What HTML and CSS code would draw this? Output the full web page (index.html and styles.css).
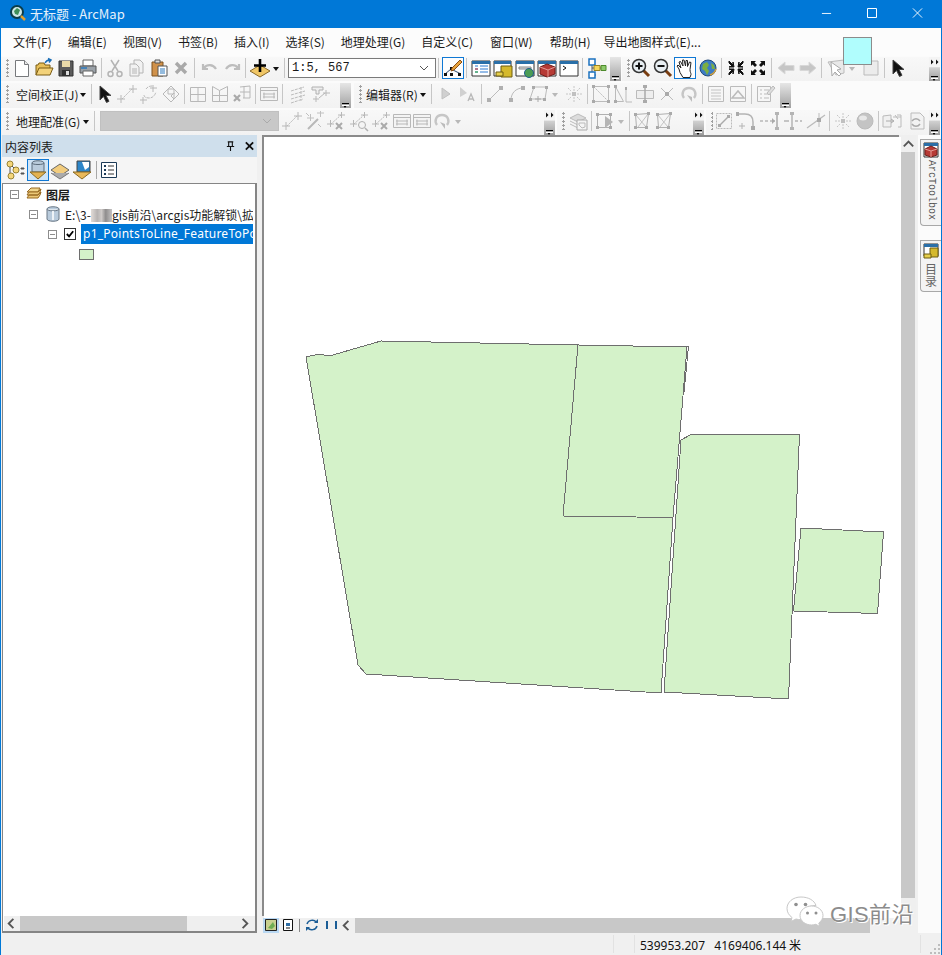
FILE: index.html
```html
<!DOCTYPE html>
<html lang="zh-CN">
<head>
<meta charset="utf-8">
<title>无标题 - ArcMap</title>
<link rel="stylesheet" href="styles.css">
</head>
<body>
<svg class="defs" width="0" height="0" aria-hidden="true">
<defs>
<symbol id="new" viewBox="0 0 22 22"><path d="M4.500 3.500h9l4 4v12h-13z" fill="#fff" stroke="#77797c"/><path d="M13.500 3.500v4h4" fill="#e8e8e8" stroke="#77797c"/></symbol>
<symbol id="open" viewBox="0 0 22 22"><path d="M3 18V8h2l1-2h5l1 2h5v3" fill="#e8c05a" stroke="#7a5c14"/><path d="M3 18l3-7h14l-3 7z" fill="#f3d27a" stroke="#7a5c14"/><path d="M12 6c1-2 3-3 5-3m-2-1.500l3 1.500-2 2.500" fill="none" stroke="#1c6fb8" stroke-width="1.500"/></symbol>
<symbol id="save" viewBox="0 0 22 22"><path d="M4 4h14v15H4z" fill="#5b5b5b" stroke="#333"/><path d="M7 4h8v6H7z" fill="#e9d9a8"/><path d="M7 13h8v6H7z" fill="#2f2f2f"/><path d="M11 14h3v4h-3z" fill="#ddd"/></symbol>
<symbol id="print" viewBox="0 0 22 22"><path d="M6 3h10v6H6z" fill="#fff" stroke="#666"/><path d="M3 9h16v7H3z" fill="#9aa1a8" stroke="#555"/><path d="M6 14h10v5H6z" fill="#fff" stroke="#666"/><path d="M4 11h6" stroke="#2a79bd" stroke-width="1.500"/></symbol>
<symbol id="cut" viewBox="0 0 22 22"><g fill="none" stroke="#b4b4b4" stroke-width="1.500"><path d="M7 3l7 11M15 3L8 14"/><circle cx="6.500" cy="17" r="2.500"/><circle cx="15.500" cy="17" r="2.500"/></g></symbol>
<symbol id="copy" viewBox="0 0 22 22"><g fill="#f2f2f2" stroke="#b4b4b4"><path d="M8 3h6l3 3v10H8z"/><path d="M4 7h6l3 3v9H4z"/><path d="M6 12h5M6 14h5M6 16h5"/></g></symbol>
<symbol id="paste" viewBox="0 0 22 22"><path d="M4 5h11v14H4z" fill="#d0914a" stroke="#7c5220"/><path d="M7 3h5v3H7z" fill="#ddd" stroke="#555"/><path d="M10 9h9v10h-9z" fill="#fff" stroke="#555"/><path d="M12 12h5M12 14h5M12 16h5" stroke="#2a79bd"/></symbol>
<symbol id="del" viewBox="0 0 22 22"><path d="M6 6l10 10M16 6L6 16" stroke="#a9a9a9" stroke-width="3.400"/></symbol>
<symbol id="undo" viewBox="0 0 22 22"><path d="M4 7v5h5M5 11c3-4 9-4 12 1" fill="none" stroke="#bdbdbd" stroke-width="2.200"/></symbol>
<symbol id="redo" viewBox="0 0 22 22"><path d="M18 7v5h-5M17 11c-3-4-9-4-12 1" fill="none" stroke="#bdbdbd" stroke-width="2.200"/></symbol>
<symbol id="add" viewBox="0 0 22 22"><path d="M11 8l10 6-10 6-10-6z" fill="#f0c665" stroke="#8a6a2a"/><path d="M11 2v13M5 8.500h12" stroke="#000" stroke-width="2.600"/></symbol>
<symbol id="edit" viewBox="0 0 22 22"><path d="M3 17l6-5 10 5" fill="none" stroke="#2c4a6e"/><path d="M2 16h3v3H2zM8 16h3v3H8zM16 16h3v3h-3zM8 10h3v3H8z" fill="#111"/><path d="M10 11l8-8 2 2-8 8-3 1z" fill="#e8a33c" stroke="#8a4d12"/></symbol>
<symbol id="wtoc" viewBox="0 0 22 22"><path d="M2 4h18v15H2z" fill="#fff" stroke="#333"/><path d="M2 4h18v3H2z" fill="#2a6fa8"/><path d="M5 9h3M10 9h8M5 12h3M10 12h8M5 15h3M10 15h8" stroke="#2a79d0"/><path d="M5 12h3" stroke="#c33"/><path d="M5 15h3" stroke="#3a3"/></symbol>
<symbol id="wcat" viewBox="0 0 22 22"><path d="M2 4h17v15H2z" fill="#fff" stroke="#333"/><path d="M2 4h17v3H2z" fill="#2a6fa8"/><path d="M9 9h11v11H9z" fill="#d5b92c" stroke="#6d5c10"/><path d="M4 15h7v4H4z" fill="#e6cf4c" stroke="#6d5c10"/></symbol>
<symbol id="wsearch" viewBox="0 0 22 22"><path d="M2 4h18v15H2z" fill="#fff" stroke="#333"/><path d="M2 4h18v3H2z" fill="#2a6fa8"/><path d="M5 10h12v2H5z" fill="#ddd" stroke="#888"/><circle cx="15" cy="16" r="4.500" fill="#4b9c55" stroke="#1f5d8c"/></symbol>
<symbol id="wbox" viewBox="0 0 22 22"><path d="M2 4h18v15H2z" fill="#fff" stroke="#333"/><path d="M2 4h18v3H2z" fill="#2a6fa8"/><path d="M4 10l7-3 8 3v7l-8 3-7-3z" fill="#b73a35" stroke="#6e1d1a"/><path d="M4 10l8 3 7-3M12 13v7" fill="none" stroke="#e59a94"/></symbol>
<symbol id="wpy" viewBox="0 0 22 22"><path d="M2 4h18v15H2z" fill="#fff" stroke="#333"/><path d="M2 4h18v3H2z" fill="#2a6fa8"/><path d="M5 9l3 2-3 2" fill="none" stroke="#111"/></symbol>
<symbol id="model" viewBox="0 0 22 22"><path d="M6 5v13M6 11h10M6 18h4" stroke="#555"/><path d="M3 2h6v6H3zM3 15h6v6H3z" fill="#fff" stroke="#1b72c0" stroke-width="1.500"/><path d="M8 8.500h6v5H8z" fill="#f5d65a" stroke="#9c8220"/><path d="M15 8.500h5v5h-5z" fill="#8dc96b" stroke="#4c8a2c"/></symbol>
<symbol id="zin" viewBox="0 0 22 22"><path d="M13 13l6 6" stroke="#7a3d10" stroke-width="3"/><circle cx="9" cy="9" r="6.500" fill="#e8eef2" stroke="#333" stroke-width="1.500"/><path d="M5.500 9h7M9 5.500v7" stroke="#111" stroke-width="2"/></symbol>
<symbol id="zout" viewBox="0 0 22 22"><path d="M13 13l6 6" stroke="#7a3d10" stroke-width="3"/><circle cx="9" cy="9" r="6.500" fill="#e8eef2" stroke="#333" stroke-width="1.500"/><path d="M5.500 9h7" stroke="#111" stroke-width="2"/></symbol>
<symbol id="hand" viewBox="0 0 22 22"><path d="M5 12L3 9l1-1 3 3-2-6 1.500-.5L9 9 8.500 3H10l1.500 6L12 3.500h1.500V9.500L15.500 5l1.500.5-1 7c0 3 1 3 1 5l-1 3H9l-3-5z" fill="#fff" stroke="#222"/></symbol>
<symbol id="globe" viewBox="0 0 22 22"><circle cx="11" cy="11" r="8" fill="#3c7cc4" stroke="#214a78"/><path d="M6 7l4-2 2 3-2 3 2 3-2 4-2-4-3-2zM14 6l3 2 1 4-3 0z" fill="#7cae42"/><path d="M13 18c3-1 5-3 6-6" fill="none" stroke="#d6a13a" stroke-width="1.500"/></symbol>
<symbol id="fzin" viewBox="0 0 22 22"><path d="M4 4l4 4V5l1 5H4l3-1-3-3zM18 4l-4 4V5l-1 5h5l-3-1 3-3zM4 18l4-4v3l1-5H4l3 1-3 3zM18 18l-4-4v3l-1-5h5l-3 1 3 3z" fill="#111" stroke="#111"/></symbol>
<symbol id="fzout" viewBox="0 0 22 22"><path d="M9 4H4v5l1.500-1.500L8 10l2-2-2.500-2.500zM13 4h5v5l-1.500-1.500L14 10l-2-2 2.500-2.500zM9 18H4v-5l1.500 1.500L8 12l2 2-2.500 2.500zM13 18h5v-5l-1.500 1.500L14 12l-2 2 2.500 2.500z" fill="#111"/></symbol>
<symbol id="back" viewBox="0 0 22 22"><path d="M3 11l7-6v3.500h9v5h-9V17z" fill="#c6c6c6" stroke="#d8d8d8"/></symbol>
<symbol id="fwd" viewBox="0 0 22 22"><path d="M19 11l-7-6v3.500H3v5h9V17z" fill="#c6c6c6" stroke="#d8d8d8"/></symbol>
<symbol id="selg" viewBox="0 0 22 22"><path d="M3 5l16-2v13l-8 2z" fill="#e9e9e9" stroke="#bbb"/><path d="M6 5l1 14 3-4 4 4 2-2-4-4 4-1z" fill="#fff" stroke="#aaa"/></symbol>
<symbol id="clr" viewBox="0 0 22 22"><path d="M4 4h14v14H4z" fill="#ececec" stroke="#bbb"/></symbol>
<symbol id="cursor" viewBox="0 0 22 22"><path d="M6 3l0 14 3.500-3.500 3 6 2.500-1.200-3-5.800 5 0z" fill="#111" stroke="#444"/></symbol>
<symbol id="link" viewBox="0 0 22 22"><g stroke="#b8b8b8" fill="none"><path d="M6 16L16 6" stroke-dasharray="2 1"/><path d="M1 16h8M5 12v8M13 6h8M17 2v8"/></g></symbol>
<symbol id="rot" viewBox="0 0 22 22"><g stroke="#b8b8b8" fill="none"><path d="M5 14v7M2 17h7M15 2v7M12 5h7"/><path d="M8 6c2-3 5-3 7-3M6 12c0 2 2 3 5 3 4 0 6-3 7-6" stroke-dasharray="3 1"/></g></symbol>
<symbol id="dia" viewBox="0 0 22 22"><g stroke="#b8b8b8" fill="#f6f6f6"><path d="M3 11l8-8 8 8-8 8z"/><path d="M8 6h6v5H8z"/><path d="M14 16l-3-3 3-3z"/></g></symbol>
<symbol id="grid" viewBox="0 0 22 22"><path d="M3.500 4.500h15v14h-15zM11 4.500v14M3.500 11.500h15" fill="none" stroke="#b8b8b8"/></symbol>
<symbol id="grid2" viewBox="0 0 22 22"><path d="M3.500 3.500l7 4 8-4v15h-15zM10.500 7.500v11M3.500 12.500h15" fill="none" stroke="#b8b8b8"/></symbol>
<symbol id="gridx" viewBox="0 0 22 22"><path d="M9 4l10-1v12H12M13 3v12M9 9h10" fill="none" stroke="#b8b8b8"/><path d="M3 12l6 6M9 12l-6 6" stroke="#aaa" stroke-width="2.200"/></symbol>
<symbol id="table" viewBox="0 0 22 22"><path d="M2.500 4.500h17v13h-17z" fill="#f4f4f4" stroke="#b8b8b8"/><path d="M2.500 7.500h17M5 11h12M5 14h12M6 9.500v6M16 9.500v6" stroke="#b8b8b8"/></symbol>
<symbol id="dash" viewBox="0 0 22 22"><path d="M4 8l13-4M4 12l14-4M4 16l14-4M4 20l12-4M14 4v14" fill="none" stroke="#bcbcbc" stroke-dasharray="3 1"/></symbol>
<symbol id="pin" viewBox="0 0 22 22"><path d="M3 4h11v3h-4v4H7V7H3z" fill="#eee" stroke="#b0b0b0"/><path d="M10 15l6-5M4 16h6M7 13v6M14 10h7M17 7v6" stroke="#b8b8b8" fill="none"/></symbol>
<symbol id="tri" viewBox="0 0 22 22"><path d="M7 5l0 11 8-5z" fill="#d0d0d0" stroke="#c0c0c0"/></symbol>
<symbol id="triA" viewBox="0 0 22 22"><path d="M3 4v10l7-4z" fill="#d0d0d0"/><path d="M11 18l3-7 3 7m-5-2h4" fill="none" stroke="#b8b8b8" stroke-width="1.300"/></symbol>
<symbol id="line" viewBox="0 0 22 22"><path d="M5 17L17 5" stroke="#bbb"/><path d="M3 15h4v4H3zM15 3h4v4h-4z" fill="#b0b0b0"/></symbol>
<symbol id="curve" viewBox="0 0 22 22"><path d="M5 17c0-7 5-12 12-12" fill="none" stroke="#bbb"/><path d="M3 15h4v4H3zM15 3h4v4h-4z" fill="#b0b0b0"/></symbol>
<symbol id="poly" viewBox="0 0 22 22"><path d="M6 4h13l-2 12H2z" fill="none" stroke="#bbb"/><path d="M4 3h3v3H4zM17 3h3v3h-3zM15 15h3v3h-3zM1 15h3v3H1z" fill="#aaa"/><path d="M10 13v6M7 16h6" stroke="#aaa"/></symbol>
<symbol id="burst" viewBox="0 0 22 22"><path d="M11 3v5M11 14v5M3 11h5M14 11h5M5 5l3 3M14 14l3 3M17 5l-3 3M5 17l3-3" stroke="#c6c6c6" stroke-dasharray="2 1"/><path d="M9 9h4v4H9z" fill="#c0c0c0"/></symbol>
<symbol id="reshape" viewBox="0 0 22 22"><path d="M3.500 3.500h15v15h-15z" fill="none" stroke="#bbb"/><path d="M4 4l14 14" stroke="#bbb" stroke-dasharray="2 1"/><path d="M2 2h3v3H2zM17 2h3v3h-3zM2 17h3v3H2zM17 17h3v3h-3z" fill="#aaa"/></symbol>
<symbol id="split" viewBox="0 0 22 22"><path d="M3.500 3.500v15h8zM14 7v12h6" fill="none" stroke="#bbb"/><path d="M2 2h3v3H2zM2 17h3v3H2zM13 4h2v3h-2z" fill="#aaa"/></symbol>
<symbol id="boxc" viewBox="0 0 22 22"><path d="M2.500 7.500h17v8h-17z" fill="#eee" stroke="#bbb"/><path d="M11 3v16" stroke="#aaa" stroke-width="1.500"/><path d="M9 2h4v3H9zM9 17h4v3H9z" fill="#aaa"/></symbol>
<symbol id="cross" viewBox="0 0 22 22"><path d="M5 17L17 5M5 5l12 12" stroke="#bbb"/><path d="M9 9h4v4H9z" fill="#aaa"/></symbol>
<symbol id="spin" viewBox="0 0 22 22"><path d="M6 15c-3-4-1-10 5-10s8 6 5 10" fill="none" stroke="#c6c6c6" stroke-width="2.400"/><path d="M9 12l5 2 0 5z" fill="#bcbcbc"/></symbol>
<symbol id="attr" viewBox="0 0 22 22"><path d="M3.500 3.500h15v15h-15z" fill="#f6f6f6" stroke="#bbb"/><path d="M6 7h10M6 10h10M6 13h10M6 16h10" stroke="#c4c4c4"/></symbol>
<symbol id="sketch" viewBox="0 0 22 22"><path d="M3.500 3.500h15v15h-15z" fill="#f6f6f6" stroke="#bbb"/><path d="M5 15l6-7 6 7z" fill="none" stroke="#bbb" stroke-width="1.500"/></symbol>
<symbol id="form" viewBox="0 0 22 22"><path d="M3.500 3.500h13v15h-13z" fill="#f6f6f6" stroke="#bbb"/><path d="M6 7h2M10 7h5M6 11h2M10 11h5M6 15h2M10 15h5" stroke="#bbb"/><path d="M13 10l6-7 2 2-6 7z" fill="#ddd" stroke="#bbb"/></symbol>
<symbol id="wand" viewBox="0 0 22 22"><path d="M5 19L15 9" stroke="#b8b8b8" stroke-width="2"/><path d="M4 8h7M7.500 4v7M14 3h7M17.500 1v6M3 3l3 3M15 14l3 3" stroke="#c0c0c0"/></symbol>
<symbol id="ptmag" viewBox="0 0 22 22"><path d="M5 14L15 5" stroke="#b8b8b8" stroke-dasharray="2 1"/><path d="M1 14h7M4.500 10v7M12 5h7M15.500 2v6" stroke="#b8b8b8"/><circle cx="13" cy="15" r="3.500" fill="none" stroke="#b0b0b0"/><path d="M16 18l3 3" stroke="#b0b0b0" stroke-width="1.500"/></symbol>
<symbol id="ptx" viewBox="0 0 22 22"><path d="M5 14L15 5" stroke="#b8b8b8" stroke-dasharray="2 1"/><path d="M1 14h7M4.500 10v7M12 5h7M15.500 2v6" stroke="#b8b8b8"/><path d="M10 13l6 6M16 13l-6 6" stroke="#aaa" stroke-width="2"/></symbol>
<symbol id="stack" viewBox="0 0 22 22"><path d="M3 8l8-4 8 4-8 4z" fill="#dcdcdc" stroke="#bbb"/><path d="M3 11l8 4 8-4M3 14l8 4 8-4" fill="none" stroke="#bbb"/><path d="M10 10h10v10H10z" fill="#f4f4f4" stroke="#aaa"/><path d="M12 13h6v4l-3 1-3-3z" fill="none" stroke="#bbb"/></symbol>
<symbol id="pg" viewBox="0 0 22 22"><path d="M3.500 4.500h13v13h-13z" fill="none" stroke="#b0b0b0"/><path d="M2 3h3v3H2zM15 3h3v3h-3zM2 16h3v3H2zM15 16h3v3h-3z" fill="#aaa"/><path d="M11 6v12l8-6z" fill="#b5b5b5"/></symbol>
<symbol id="pg2" viewBox="0 0 22 22"><path d="M3.500 4.500l13-1-2 14-10 0z" fill="none" stroke="#b0b0b0"/><path d="M3.500 4.500L14 17M16 4L6 17" stroke="#c4c4c4"/><path d="M2 3h3v3H2zM15 2h3v3h-3zM2 16h3v3H2zM13 16h3v3h-3z" fill="#aaa"/></symbol>
<symbol id="extbox" viewBox="0 0 22 22"><path d="M3.500 3.500h15v15h-15z" fill="#f4f4f4" stroke="#bbb" stroke-dasharray="2 1"/><path d="M7 15L15 7" stroke="#aaa" stroke-width="1.500"/><path d="M5 14h3v3H5zM14 5h3v3h-3z" fill="#aaa"/></symbol>
<symbol id="fillet" viewBox="0 0 22 22"><path d="M2 4h8c5 0 8 3 8 8v6" fill="none" stroke="#b4b4b4" stroke-width="1.500"/><path d="M1 2h3v4H1zM16 16h4v4h-4z" fill="#aaa"/><path d="M4 16h6M7 13v6" stroke="#b4b4b4"/></symbol>
<symbol id="ext" viewBox="0 0 22 22"><path d="M1 11h3M6 11h3M11 11h5" stroke="#b8b8b8" stroke-width="1.500"/><path d="M13 8l3 3-3 3z" fill="#aaa"/><path d="M18 3v16" stroke="#aaa" stroke-width="1.500"/><path d="M16 2h4v3h-4zM16 17h4v3h-4z" fill="#b4b4b4"/></symbol>
<symbol id="trim" viewBox="0 0 22 22"><path d="M11 2v18M3 11h5M14 11h3M19 11h2" stroke="#b4b4b4" stroke-width="1.500"/><path d="M9 2h4v3H9zM9 17h4v3H9z" fill="#b4b4b4"/></symbol>
<symbol id="inter" viewBox="0 0 22 22"><path d="M2 18L20 5" stroke="#bbb" stroke-width="1.300"/><path d="M14 3v14" stroke="#bbb"/><path d="M12 8h4v4h-4z" fill="#a9a9a9"/></symbol>
<symbol id="sphere" viewBox="0 0 22 22"><circle cx="11" cy="11" r="8" fill="#c4c4c4" stroke="#bbb"/><ellipse cx="9" cy="8" rx="4" ry="2.500" fill="#e8e8e8"/></symbol>
<symbol id="dbox" viewBox="0 0 22 22"><path d="M2 6l8-1v12l-8 0zM12 7h8M14 5l3 4" fill="#f0f0f0" stroke="#bbb"/><path d="M5 11h7M10 9l3 2-3 2" fill="none" stroke="#aaa"/><path d="M16 5h4v12h-3" fill="none" stroke="#bbb"/></symbol>
<symbol id="dsync" viewBox="0 0 22 22"><path d="M6 3h9l4 4v12H6z" fill="#f2f2f2" stroke="#bbb"/><path d="M7 11c2-3 6-3 8 0M15 14c-2 3-6 3-8 0" fill="none" stroke="#aaa" stroke-width="1.500"/></symbol>
<symbol id="tree" viewBox="0 0 22 22"><circle cx="5" cy="5" r="3" fill="#f5d67a" stroke="#9a8434"/><circle cx="11" cy="11" r="3" fill="#f5d67a" stroke="#9a8434"/><circle cx="6" cy="17" r="3" fill="#f5d67a" stroke="#9a8434"/><path d="M5 8v6M7 7l2 2M16 9h3v1h-3zM16 14h3v1h-3z" stroke="#555" fill="#555"/></symbol>
<symbol id="tdb" viewBox="0 0 22 22"><path d="M5 4c0-3 12-3 12 0v9H5z" fill="#b9cbdc" stroke="#5b6b7b"/><path d="M5 4c0 2 12 2 12 0" fill="none" stroke="#5b6b7b"/><path d="M3 13h16l-8 7z" fill="#e3b252" stroke="#8a6a22"/></symbol>
<symbol id="tlayer" viewBox="0 0 22 22"><path d="M2 11l9-6 9 6-9 6z" fill="#f2cc7d" stroke="#666"/><path d="M2 14l9 6 9-6" fill="#aaa" stroke="#777"/></symbol>
<symbol id="tsrc" viewBox="0 0 22 22"><path d="M6 2h13v11H6z" fill="#2d86c9" stroke="#444"/><path d="M11 3h7v5l-4 3z" fill="#fff"/><path d="M2 13l9 7 9-7z" fill="#e8b85a" stroke="#8a6a22"/></symbol>
<symbol id="topts" viewBox="0 0 22 22"><path d="M3.500 3.500h15v15h-15z" fill="#fff" stroke="#1d3b57"/><path d="M10 7h6M10 11h6M10 15h6" stroke="#333"/><path d="M6 6h2v2H6zM6 10h2v2H6zM6 14h2v2H6z" fill="#1d3b57"/></symbol>
<symbol id="vdata" viewBox="0 0 14 14"><path d="M1.500 1.500h11v11h-11z" fill="#c8d090" stroke="#222"/><path d="M4 10l5-6 2 4-3 3z" fill="#6fae52"/></symbol>
<symbol id="vpage" viewBox="0 0 14 14"><path d="M2.500 1.500h9v11h-9z" fill="#fff" stroke="#111"/><path d="M5 5h4v3H5z" fill="#2f6ea5"/><path d="M5 10h4" stroke="#111"/></symbol>
<symbol id="vref" viewBox="0 0 14 14"><path d="M2 6c1-4 7-5 9-2M12 8c-1 4-7 5-9 2" fill="none" stroke="#1b5d96" stroke-width="1.500"/><path d="M9 5h4V1zM5 9H1v4z" fill="#1b5d96"/></symbol>
<symbol id="layers" viewBox="0 0 16 16"><path d="M1 6l4-4h9l-2 4z" fill="#f0d58c" stroke="#996a22"/><path d="M1 9l2-3h9l3-3-1 3-2 3zM1 12l2-3h9l3-3-1 3-2 3z" fill="#ecc877" stroke="#996a22"/></symbol>
<symbol id="db" viewBox="0 0 16 16"><path d="M2 3c0-3 12-3 12 0v10c0 3-12 3-12 0z" fill="#b9cbdc" stroke="#6a7886"/><path d="M2 3c0 2.500 12 2.500 12 0" fill="#dfe7ee" stroke="#6a7886"/><path d="M8 5v9" stroke="#eef3f7" stroke-width="2"/></symbol>
<symbol id="tabbox" viewBox="0 0 16 16"><path d="M1 1h14v14H1z" fill="#fff" stroke="#333"/><path d="M1 1h14v3H1z" fill="#2a6fa8"/><path d="M2 7l6-3 6 3v6l-6 2-6-2z" fill="#b73a35" stroke="#6e1d1a"/><path d="M2 7l6 2 6-2M8 9v6" fill="none" stroke="#e59a94"/></symbol>
<symbol id="tabcat" viewBox="0 0 16 16"><path d="M1 1h14v12H1z" fill="#fff" stroke="#333"/><path d="M1 1h14v3H1z" fill="#2a6fa8"/><path d="M7 5h8v9H7z" fill="#d5b92c" stroke="#6d5c10"/><path d="M1 11h7v4H1z" fill="#e6cf4c" stroke="#6d5c10"/></symbol>
<symbol id="wx" viewBox="0 0 38 32"><path d="M15 1C7 1 1 6 1 12.500c0 3.700 2 6.800 5 9l-1 4 5-2.500c1.500.5 3 .7 5 .7 1 0 1.500 0 2.200-.1-.4-1-.6-2.200-.6-3.300C16.600 14 22 9.500 29 9.500h1C28.500 4.500 22.500 1 15 1z" fill="#fff" stroke="#c8c8c8"/><path d="M37 19.500c0-5.500-5.500-9.500-11.500-9.500S14 14 14 19.500 19.500 29 25.500 29c1.500 0 3-.3 4.300-.7l4 2.200-1-3.500c2.500-1.800 4.200-4.500 4.200-7.500z" fill="#fff" stroke="#c8c8c8"/><circle cx="10" cy="8.500" r="1.800" fill="#8f8f8f"/><circle cx="19.500" cy="8.500" r="1.800" fill="#8f8f8f"/><circle cx="21.500" cy="17" r="1.500" fill="#8f8f8f"/><circle cx="30" cy="17" r="1.500" fill="#8f8f8f"/></symbol>
<symbol id="chevs" viewBox="0 0 11 8"><path d="M2 1.500l2.500 2.500L2 6.500zM7 1.500l2.500 2.500L7 6.500z" fill="#111"/></symbol>
</defs>
</svg>

<div class="app">
  <header class="titlebar">
    <svg class="appicon" viewBox="0 0 16 16"><circle cx="7" cy="7" r="6" fill="#cfe8e8" stroke="#0b3d4a" stroke-width="2"/><path d="M4 6l3-3 3 2-2 5-3-1z" fill="#3f8f5a"/><path d="M11 11l4 4" stroke="#e0a030" stroke-width="2.500"/></svg>
    <span class="apptitle">无标题 - ArcMap</span>
    <div class="winctl">
      <svg viewBox="0 0 12 12" class="wc"><path d="M1 6.500h10" stroke="#fff"/></svg>
      <svg viewBox="0 0 12 12" class="wc"><path d="M1.500 1.500h9v9h-9z" fill="none" stroke="#fff"/></svg>
      <svg viewBox="0 0 12 12" class="wc"><path d="M1 1l10 10M11 1L1 11" stroke="#fff"/></svg>
    </div>
  </header>

  <nav class="menubar">
    <span>文件(F)</span><span>编辑(E)</span><span>视图(V)</span><span>书签(B)</span><span>插入(I)</span><span>选择(S)</span><span>地理处理(G)</span><span>自定义(C)</span><span class="m1">窗口(W)</span><span class="m1">帮助(H)</span><span class="last">导出地图样式(E)...</span>
    <div class="swatch"></div>
  </nav>

  <div class="row r1">
    <div class="tb t1a">
      <i class="grip"></i>
      <svg class="i"><use href="#new"/></svg><svg class="i"><use href="#open"/></svg><svg class="i"><use href="#save"/></svg><svg class="i"><use href="#print"/></svg><b class="sep"></b>
      <svg class="i"><use href="#cut"/></svg><svg class="i"><use href="#copy"/></svg><svg class="i"><use href="#paste"/></svg><svg class="i"><use href="#del"/></svg><b class="sep"></b>
      <svg class="i m2"><use href="#undo"/></svg><svg class="i"><use href="#redo"/></svg><b class="sep"></b>
      <svg class="i m1"><use href="#add"/></svg><em class="caret"></em><b class="sep"></b>
      <div class="combo m1"><span>1:5, 567</span><svg class="chev" viewBox="0 0 10 6"><path d="M1 1l4 4 4-4" fill="none" stroke="#555"/></svg></div><b class="sep"></b>
      <svg class="i on m1"><use href="#edit"/></svg>
      <b class="sep"></b>
      <svg class="i m1"><use href="#wtoc"/></svg><svg class="i"><use href="#wcat"/></svg><svg class="i"><use href="#wsearch"/></svg><svg class="i"><use href="#wbox"/></svg><svg class="i"><use href="#wpy"/></svg><b class="sep"></b>
      <svg class="i m1"><use href="#model"/></svg>
      <i class="ovf"></i>
    </div>
    <div class="tb t1b">
      <i class="grip g8"></i>
      <svg class="i"><use href="#zin"/></svg><svg class="i"><use href="#zout"/></svg><svg class="i on"><use href="#hand"/></svg><svg class="i m1"><use href="#globe"/></svg><b class="sep"></b>
      <svg class="i m1"><use href="#fzin"/></svg><svg class="i"><use href="#fzout"/></svg><b class="sep"></b>
      <svg class="i m1"><use href="#back"/></svg><svg class="i"><use href="#fwd"/></svg><b class="sep"></b>
      <svg class="i m1"><use href="#selg"/></svg><em class="caret off"></em><svg class="i m2"><use href="#clr"/></svg><b class="sep"></b>
      <svg class="i"><use href="#cursor"/></svg>
      <i class="ovf two"><svg class="cv"><use href="#chevs"/></svg></i>
    </div>
  </div>

  <div class="row r2">
    <div class="tb t2a">
      <i class="grip"></i><span class="lbl">空间校正(J)</span><em class="caret"></em><b class="sep"></b>
      <svg class="i"><use href="#cursor"/></svg><svg class="i"><use href="#link"/></svg><svg class="i"><use href="#rot"/></svg><svg class="i"><use href="#dia"/></svg><b class="sep"></b>
      <svg class="i"><use href="#grid"/></svg><svg class="i"><use href="#grid2"/></svg><svg class="i"><use href="#gridx"/></svg><b class="sep"></b>
      <svg class="i"><use href="#table"/></svg><b class="sep"></b>
      <svg class="i m2"><use href="#dash"/></svg><svg class="i"><use href="#pin"/></svg>
      <i class="ovf"></i>
    </div>
    <div class="tb t2b">
      <i class="grip g8"></i><span class="lbl">编辑器(R)</span><em class="caret"></em><b class="sep"></b>
      <svg class="i m1"><use href="#tri"/></svg><svg class="i"><use href="#triA"/></svg><b class="sep"></b>
      <svg class="i"><use href="#line"/></svg><svg class="i"><use href="#curve"/></svg><svg class="i"><use href="#poly"/></svg><em class="caret off"></em><svg class="i m2"><use href="#burst"/></svg><b class="sep"></b>
      <svg class="i"><use href="#reshape"/></svg><svg class="i"><use href="#split"/></svg><svg class="i"><use href="#boxc"/></svg><svg class="i"><use href="#cross"/></svg><svg class="i"><use href="#spin"/></svg><b class="sep"></b>
      <svg class="i"><use href="#attr"/></svg><svg class="i"><use href="#sketch"/></svg><b class="sep"></b>
      <svg class="i"><use href="#form"/></svg>
      <i class="ovf"></i>
    </div>
  </div>

  <div class="row r3">
    <div class="tb t3a">
      <i class="grip"></i><span class="lbl">地理配准(G)</span><em class="caret"></em><b class="sep"></b>
      <div class="combo dis"><svg class="chev" viewBox="0 0 10 6"><path d="M1 1l4 4 4-4" fill="none" stroke="#aaa"/></svg></div>
      <svg class="i m2"><use href="#link"/></svg><svg class="i"><use href="#wand"/></svg><svg class="i m1"><use href="#ptx"/></svg><svg class="i m1"><use href="#ptmag"/></svg><svg class="i"><use href="#ptx"/></svg><svg class="i n"><use href="#table"/></svg><svg class="i n"><use href="#table"/></svg><svg class="i n"><use href="#spin"/></svg><em class="caret off"></em>
      <i class="ovf two"><svg class="cv"><use href="#chevs"/></svg></i>
    </div>
    <div class="tb t3b">
      <i class="grip"></i><svg class="i"><use href="#stack"/></svg><b class="sep"></b>
      <svg class="i"><use href="#pg"/></svg><em class="caret off"></em><b class="sep"></b>
      <svg class="i"><use href="#pg2"/></svg><svg class="i"><use href="#pg2"/></svg>
      <i class="ovf two"><svg class="cv"><use href="#chevs"/></svg></i>
    </div>
    <div class="tb t3c">
      <i class="grip g7"></i><svg class="i"><use href="#extbox"/></svg><svg class="i"><use href="#fillet"/></svg><svg class="i m2"><use href="#ext"/></svg><svg class="i"><use href="#trim"/></svg><svg class="i m2"><use href="#inter"/></svg><b class="sep"></b>
      <svg class="i"><use href="#burst"/></svg><svg class="i"><use href="#sphere"/></svg><b class="sep"></b>
      <svg class="i"><use href="#dbox"/></svg><svg class="i m2"><use href="#dsync"/></svg>
      <i class="ovf two"><svg class="cv"><use href="#chevs"/></svg></i>
    </div>
  </div>

  <main class="main">
    <aside class="toc">
      <div class="tochead"><span>内容列表</span>
        <svg class="pin" viewBox="0 0 12 12"><path d="M3 1.500h6M4 1.500v5h4v-5M2 6.500h8M6 6.500v5" fill="none" stroke="#111" stroke-width="1.200"/></svg>
        <svg class="close" viewBox="0 0 12 12"><path d="M2 2l8 8M10 2l-8 8" stroke="#111" stroke-width="2"/></svg>
      </div>
      <div class="toctools">
        <svg class="t"><use href="#tree"/></svg><svg class="t on"><use href="#tdb"/></svg><svg class="t"><use href="#tlayer"/></svg><svg class="t"><use href="#tsrc"/></svg><b class="sep tall"></b><svg class="t"><use href="#topts"/></svg>
      </div>
      <div class="tocbox">
        <ul class="tree">
          <li class="lv0"><i class="exp"></i><svg class="n16"><use href="#layers"/></svg><strong>图层</strong></li>
          <li class="lv1"><i class="exp"></i><svg class="n16"><use href="#db"/></svg><span class="path">E:\3-<u class="blur"></u>gis前沿\arcgis功能解锁\拡</span></li>
          <li class="lv2"><i class="exp"></i><i class="chk"><svg viewBox="0 0 11 11"><path d="M2 5.500l2.500 2.500L9 2.500" fill="none" stroke="#000" stroke-width="2"/></svg></i><span class="sel">p1_PointsToLine_FeatureToPo</span></li>
          <li class="lv3"><i class="sym"></i></li>
        </ul>
        <div class="hscroll"><svg class="ar" viewBox="0 0 16 16"><path d="M10 3L5 8l5 5" fill="none" stroke="#555" stroke-width="2"/></svg><div class="thumb"></div><svg class="ar end" viewBox="0 0 16 16"><path d="M6 3l5 5-5 5" fill="none" stroke="#555" stroke-width="2"/></svg></div>
      </div>
    </aside>

    <section class="mapwrap">
      <svg class="map" viewBox="264 137 637 781" shape-rendering="crispEdges">
        <g fill="#d4f2c9" stroke="#6e6e6e">
          <polygon points="306,357 317,354.500 331,355.500 381,341 578,345 563,516 673,517.500 661,693 366,674 358,665"/>
          <polygon points="578,345 687,347 673,517.500 563,516"/>
          <polygon points="691,434.500 799.500,434.500 788.500,699 664,692 681,440"/>
          <polygon points="801,528 883.500,532 877.500,613.500 793.500,611"/>
        </g>
        <polyline points="688.500,346.500 684,392" fill="none" stroke="#6e6e6e"/>
      </svg>
      <div class="vscroll"><svg class="ar" viewBox="0 0 16 16"><path d="M3 11l5-5 5 5" fill="none" stroke="#555" stroke-width="2"/></svg><div class="vthumb"></div></div>
      <div class="mapbar">
        <span class="vb on"><svg><use href="#vdata"/></svg></span><span class="vb"><svg><use href="#vpage"/></svg></span><b class="sep"></b>
        <span class="vb"><svg><use href="#vref"/></svg></span><span class="vb pause"></span>
        <svg class="ar" viewBox="0 0 16 16"><path d="M10 3L5 8l5 5" fill="none" stroke="#555" stroke-width="2"/></svg>
        <div class="thumb"></div>
      </div>
      <div class="mark"><svg><use href="#wx"/></svg><span>GIS前沿</span></div>
    </section>

    <aside class="dock">
      <div class="tab tall"><svg><use href="#tabbox"/></svg><span>ArcToolbox</span></div>
      <div class="tab short"><svg><use href="#tabcat"/></svg><span class="cjk">目录</span></div>
    </aside>
  </main>

  <footer class="status">
    <i class="cell c1"></i><i class="cell c2"></i>
    <span class="coords">539953.207&nbsp;&nbsp;&nbsp;4169406.144 米</span>
    <i class="cell c3"></i>
    <svg class="rs" viewBox="0 0 12 12"><path d="M9 1h2v2H9zM5 5h2v2H5zM9 5h2v2H9zM1 9h2v2H1zM5 9h2v2H5zM9 9h2v2H9z" fill="#bdbdbd"/></svg>
  </footer>
</div>
</body>
</html>
```

FILE: styles.css
```css
* { box-sizing: border-box; }
html, body { margin: 0; padding: 0; }
body { width: 942px; height: 955px; overflow: hidden; background: #f0f0f0; font: 12px "Noto Sans CJK SC", "Noto Sans", sans-serif; color: #1a1a1a; }
.defs { position: absolute; }
i, em, b, u { font-style: normal; font-weight: normal; text-decoration: none; display: block; }
ul { list-style: none; margin: 0; padding: 0; }

.app { width: 942px; height: 955px; display: flex; flex-direction: column; border-left: 1px solid #0078d7; border-right: 1px solid #0078d7; position: relative; background: #fafafa; }

.titlebar { height: 28px; margin: 0 -1px; background: #0078d7; display: flex; align-items: center; padding: 0 0 2px 10px; color: #e6f1fb; flex: none; }
.appicon { width: 16px; height: 16px; }
.apptitle { margin-left: 4px; font: 13px "Noto Sans CJK SC", "Noto Sans", sans-serif; }
.winctl { margin-left: auto; display: flex; }
.wc { width: 12px; height: 12px; margin-right: 34px; }
.wc:last-child { margin-right: 19px; width: 11px; }
.wc:first-child { width: 11px; }

.menubar { height: 28px; flex: none; display: flex; align-items: center; gap: 16px; padding: 0 0 1px 12px; background: #fcfcfc; position: relative; white-space: nowrap; }
.menubar .last { margin-left: -3px; }
.swatch { position: absolute; left: 842px; top: 9px; width: 29px; height: 28px; background: #b0fdfd; border: 1px solid #8c8c8c; z-index: 2; }

.m1 { margin-left: 1px; }
.m2 { margin-left: 2px; }

.row { flex: none; display: flex; background: #fbfbfb; }
.r1 { height: 26px; padding: 1px 0; }
.r2 { height: 26px; padding-top: 1px; }
.r3 { height: 27px; padding-top: 2px; }
.tb { display: flex; align-items: center; height: 100%; padding-bottom: 3px; background: linear-gradient(#f8f8f8, #f2f2f2); position: relative; }
.r1 .tb { padding-bottom: 2px; }
.t1a { width: 620px; }
.t1b { width: 318px; margin-left: 1px; }
.t2a { width: 350px; }
.t2b { width: 437px; margin-left: 3px; }
.t3a { width: 554px; }
.t3b { width: 147px; margin-left: 2px; }
.t3c { width: 234px; margin-left: 2px; }

.grip { width: 10px; height: 18px; flex: none; background: radial-gradient(circle at 6.500px 1.500px, #a0a0a0 1px, transparent 1.200px) 0 0 / 10px 4px repeat-y; }
.grip.g8 { width: 8px; }
.grip.g7 { width: 7px; }
.i { width: 22px; height: 22px; flex: none; }
.i.on { outline: 1.500px solid #0f78d4; outline-offset: -1px; background: #fdfdfd; }
.i.n { margin-left: -2px; }
.sep { width: 1px; height: 20px; background: #c6c6c6; margin: 0 2px; flex: none; }
.sep.tall { height: 18px; margin: 0 1px 0 3px; background: #a8a8a8; }
.caret { width: 11px; height: 22px; flex: none; position: relative; }
.caret::after { content: ""; position: absolute; left: 2px; top: 10px; border: 3.500px solid transparent; border-top: 4px solid #111; border-bottom: 0; }
.caret.off::after { border-top-color: #b8b8b8; }
.ovf { position: absolute; right: 0; top: 0; bottom: 0; width: 11px; background: linear-gradient(#e6e6e6, #a0a0a0); }
.ovf::after { content: ""; position: absolute; left: 2px; bottom: 4px; width: 7px; height: 1px; background: #000; box-shadow: 0 2px 0 #fff; }
.ovf::before { content: ""; position: absolute; left: 3px; bottom: 0; border: 2.500px solid transparent; border-top: 3px solid #000; border-bottom: 0; }
.ovf.two { background: linear-gradient(#f4f4f4 0 40%, #d0d0d0 45%, #9c9c9c); }
.cv { display: block; width: 11px; height: 8px; margin-top: 1px; }
.lbl { white-space: nowrap; font-size: 12px; margin-left: 5px; }
.t2a .lbl { width: 62px; }
.t2b .lbl { width: 52px; margin-left: 4px; }
.t3a .lbl { width: 65px; }

.combo { width: 148px; height: 20px; background: #fff; border: 1px solid #7a7a7a; display: flex; align-items: center; justify-content: space-between; padding: 0 4px 0 3px; font: 12px "Liberation Mono", monospace; flex: none; }
.combo.dis { width: 179px; margin-left: 3px; background: #c8c8c8; border-color: #c0c0c0; justify-content: flex-end; }
.chev { width: 10px; height: 6px; margin-right: 2px; }

.main { flex: 1; display: flex; min-height: 0; position: relative; background: #f0f0f0; }
.toc { width: 255px; flex: none; display: flex; flex-direction: column; margin-left: 1px; }
.tochead { height: 22px; flex: none; background: #cfdfec; display: flex; align-items: center; padding-left: 3px; font-size: 12px; }
.tochead span { flex: 1; }
.pin { width: 11px; height: 12px; margin-right: 8px; }
.close { width: 11px; height: 12px; margin-right: 2px; }
.toctools { height: 26px; flex: none; display: flex; align-items: center; padding-left: 3px; background: #f5f5f5; }
.t { width: 22px; height: 22px; flex: none; }
.t.on { outline: 1.500px solid #0f78d4; outline-offset: -1px; background: #cfe4f6; }
.tocbox { flex: 1; min-height: 0; background: #fff; border: 1px solid #858585; border-width: 1px 2px 2px 1px; display: flex; flex-direction: column; }
.tree { flex: 1; overflow: hidden; }
.tree li { height: 20px; display: flex; align-items: center; white-space: nowrap; }
.lv0 { padding-left: 7px; }
.lv1 { padding-left: 26px; }
.lv2 { padding-left: 45px; }
.lv3 { padding-left: 76px; }
.exp { width: 9px; height: 9px; border: 1px solid #8d8d8d; background: linear-gradient(#8d8d8d, #8d8d8d) center / 5px 1px no-repeat #fff; flex: none; margin-right: 7px; }
.n16 { width: 16px; height: 16px; margin-right: 4px; flex: none; }
.lv0 strong { font-weight: 700; }
.path { width: 188px; overflow: hidden; white-space: nowrap; display: block; }
.blur { display: inline-block; width: 21px; height: 13px; vertical-align: -2px; background: linear-gradient(90deg, #e2dcd8, #b7b3b2 30%, #cfcbc9 50%, #8f8d8d 70%, #c4c2c2); }
.chk { width: 12px; height: 12px; border: 1px solid #333; background: #fff; flex: none; margin-right: 5px; }
.chk svg { display: block; width: 10px; height: 10px; }
.sel { width: 172px; height: 20px; background: #0078d7; color: #fff; font: 12px/20px "Noto Sans", sans-serif; overflow: hidden; padding-left: 2px; letter-spacing: .25px; }
.sym { width: 15px; height: 11px; background: #d4f2c9; border: 1px solid #6e6e6e; }

.hscroll { height: 15px; flex: none; background: #efefef; display: flex; align-items: center; margin-left: 1px; }
.ar { width: 15px; height: 15px; flex: none; }
.hscroll .thumb { width: 167px; height: 15px; background: #c8c8c8; margin-left: 1px; }
.hscroll .end { margin-left: auto; margin-right: 3px; }

.mapwrap { width: 654px; margin-left: 5px; flex: none; display: grid; grid-template-columns: 639px 15px; grid-template-rows: 1fr 15px; position: relative; background: #efefef; }
.map { width: 637px; height: 781px; background: #fff; display: block; justify-self: end; align-self: end; grid-column: 1; grid-row: 1; box-shadow: -2px -2px 0 #8a8a8a; }
.vscroll { grid-column: 2; grid-row: 1; background: #efefef; display: flex; flex-direction: column; padding: 1px 1px 0 0; }
.vthumb { height: 746px; background: #c8c8c8; margin-top: 1px; }
.mapbar { grid-column: 1 / 3; grid-row: 2; display: flex; align-items: center; background: #f0f0f0; padding-left: 1px; }
.vb { width: 15px; height: 15px; display: block; flex: none; }
.vb svg { width: 14px; height: 14px; display: block; }
.vb + .vb { margin-left: 2px; }
.vb.on { background: #b9d8f3; width: 16px; padding-left: 1px; }
.vb.pause { position: relative; margin-left: 2px; }
.vb.pause::after { content: ""; position: absolute; left: 4px; top: 3px; width: 7px; height: 8px; border-left: 2px solid #1b5d96; border-right: 2px solid #1b5d96; }
.mapbar .sep { height: 13px; margin: 0 5px 0 3px; background: #888; }
.mapbar .thumb { width: 515px; height: 15px; background: #c8c8c8; margin-left: 1px; }
.mapbar .ar { margin-left: 2px; }
.mark { position: absolute; left: 524px; top: 761px; display: flex; align-items: center; gap: 6px; color: #8c8c8c; font: 22px "Liberation Sans", "Noto Sans CJK SC", sans-serif; letter-spacing: .4px; text-shadow: 1px 1px 0 #fff, -1px -1px 0 #fff; white-space: nowrap; }
.mark svg { width: 38px; height: 32px; flex: none; }

.dock { width: 23px; flex: none; margin-left: 2px; display: flex; flex-direction: column; padding: 4px 0 0 2px; gap: 14px; background: #fbfbfb; }
.tab { width: 21px; border: 1px solid #a8a8a8; border-right: 0; border-radius: 0 0 0 4px; background: #f4f4f4; display: flex; flex-direction: column; align-items: center; padding-top: 2px; }
.tab.tall { height: 87px; }
.tab.short { height: 52px; }
.tab svg { width: 16px; height: 16px; flex: none; }
.tab span { writing-mode: vertical-rl; font: 10px "Liberation Mono", monospace; color: #555; margin-top: 2px; }
.tab span.cjk { font: 12px "Noto Sans CJK SC", sans-serif; color: #666; margin-top: 4px; }

.status { height: 22px; flex: none; background: #f0f0f0; display: flex; align-items: center; position: relative; padding: 2px 0 0 639px; }
.coords { font: 12px "Noto Sans", sans-serif; color: #111; white-space: nowrap; }
.cell { position: absolute; top: 2px; bottom: 2px; width: 1px; background: #e2e2e2; }
.c1 { left: 612px; }
.c2 { left: 633px; }
.c3 { left: 919px; }
.rs { width: 12px; height: 12px; position: absolute; right: 0; bottom: 0; }
```
